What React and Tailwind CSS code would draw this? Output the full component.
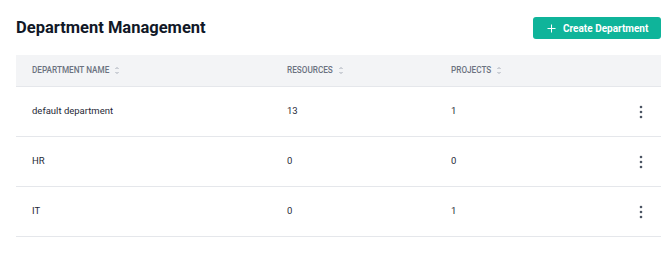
import React from 'react';

const rows = [
  { name: 'default department', resources: 13, projects: 1 },
  { name: 'HR', resources: 0, projects: 0 },
  { name: 'IT', resources: 0, projects: 1 },
];

const SortIcon = () => (
  <svg width="6" height="9" viewBox="0 0 6 9" className="ml-[5px] text-[#9ca3af]" fill="none" stroke="currentColor" strokeWidth="0.9">
    <path d="M1.5 3 L3 1.5 L4.5 3" />
    <path d="M1.5 6 L3 7.5 L4.5 6" />
  </svg>
);

const Kebab = () => (
  <svg width="4" height="14" viewBox="0 0 4 14" className="text-[#4b5563]" fill="currentColor">
    <circle cx="2" cy="2" r="1.3" />
    <circle cx="2" cy="7" r="1.3" />
    <circle cx="2" cy="12" r="1.3" />
  </svg>
);

export default function App() {
  return (
    <div className="w-[670px] h-[254px] bg-white pl-4 pr-[9px] font-['Roboto',sans-serif]">
      {/* Page header */}
      <div className="flex items-center justify-between pt-[17px]">
        <h1 className="text-[16.5px] leading-[22px] font-bold text-[#111827]">Department Management</h1>
        <button className="flex items-center h-[22px] w-[128px] rounded-[3px] bg-[#0fb49a] pl-[14px] text-white text-[10px] font-bold">
          <svg width="9" height="9" viewBox="0 0 9 9" stroke="currentColor" strokeWidth="1" className="mr-[7px]">
            <path d="M4.5 0.5 V8.5 M0.5 4.5 H8.5" />
          </svg>
          Create Department
        </button>
      </div>

      {/* Table */}
      <div className="mt-4">
        <div className="grid grid-cols-[255px_164px_1fr_40px] items-center h-[32px] bg-[#f3f4f6] border-b border-[#e5e7eb] pl-4 text-[8.2px] font-medium text-[#6b7280] uppercase">
          <div className="flex items-center">Department Name<SortIcon /></div>
          <div className="flex items-center">Resources<SortIcon /></div>
          <div className="flex items-center">Projects<SortIcon /></div>
          <div />
        </div>
        {rows.map((row) => (
          <div key={row.name} className="grid grid-cols-[255px_164px_1fr_40px] items-center h-[50px] border-b border-[#e5e7eb] pl-4 text-[9.5px] text-[#1f2937]">
            <div>{row.name}</div>
            <div>{row.resources}</div>
            <div>{row.projects}</div>
            <div className="flex justify-center pr-[1px]">
              <Kebab />
            </div>
          </div>
        ))}
      </div>
    </div>
  );
}
